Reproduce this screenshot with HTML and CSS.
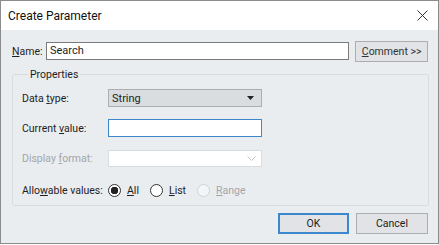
FILE: index.html
```html
<!DOCTYPE html>
<html lang="en">
<head>
    <meta charset="UTF-8">
    <title>Create Parameter</title>
    <link rel="stylesheet" href="styles.css">
</head>
<body>

    <div class="dialog">
        <div class="title-bar">
            <span class="title">Create Parameter</span>
            <svg class="close-icon" width="11" height="11" viewBox="0 0 11 11">
                <path d="M0.5 0.5 L10.5 10.5 M10.5 0.5 L0.5 10.5" stroke="#333" stroke-width="1" fill="none"/>
            </svg>
        </div>

        <div class="dialog-body">
            <div class="name-row">
                <label class="name-label"><u>N</u>ame:</label>
                <div class="text-input name-input">Search</div>
                <button class="btn comment-btn"><u>C</u>omment &gt;&gt;</button>
            </div>

            <fieldset class="group">
                <legend>Properties</legend>

                <div class="prop-row">
                    <label class="prop-label">Data <u>t</u>ype:</label>
                    <div class="select">
                        <span>String</span>
                        <svg width="7" height="4" viewBox="0 0 7 4"><path d="M0 0 H7 L3.5 4 Z" fill="#222"/></svg>
                    </div>
                </div>

                <div class="prop-row">
                    <label class="prop-label">Current <u>v</u>alue:</label>
                    <div class="text-input focused"></div>
                </div>

                <div class="prop-row disabled">
                    <label class="prop-label">Display <u>f</u>ormat:</label>
                    <div class="combo-disabled">
                        <svg width="9" height="5" viewBox="0 0 9 5"><path d="M0.5 0.5 L4.5 4.5 L8.5 0.5" stroke="#c4c7ca" fill="none"/></svg>
                    </div>
                </div>

                <div class="prop-row radio-row">
                    <label class="prop-label">Allo<u>w</u>able values:</label>
                    <div class="radios">
                        <span class="radio checked"></span><span class="radio-text"><u>A</u>ll</span>
                        <span class="radio"></span><span class="radio-text"><u>L</u>ist</span>
                        <span class="radio off"></span><span class="radio-text off-text"><u>R</u>ange</span>
                    </div>
                </div>
            </fieldset>

            <div class="footer">
                <button class="btn ok-btn">OK</button>
                <button class="btn cancel-btn">Cancel</button>
            </div>
        </div>
    </div>

</body>
</html>
```

FILE: styles.css
```css
body {
    margin: 0;
    padding: 0;
    font-family: Roboto, "Noto Sans", sans-serif;
    font-size: 10.5px;
    color: #1e1e1e;
}

.dialog {
    width: 439px;
    height: 244px;
    box-sizing: border-box;
    border: 1px solid #8c8c8c;
    background-color: #eaedf0;
    display: flex;
    flex-direction: column;
}

.title-bar {
    height: 29px;
    background-color: white;
    display: flex;
    align-items: center;
    justify-content: space-between;
    padding: 0 10px 0 7px;
    flex-shrink: 0;
}

.title {
    font-size: 12px;
    color: #111;
}

.dialog-body {
    padding: 11px 10px 0 11px;
}

.name-row {
    display: flex;
    align-items: center;
    height: 20px;
}

.name-label {
    width: 34px;
    white-space: nowrap;
}

.text-input {
    box-sizing: border-box;
    height: 18px;
    background-color: white;
    border: 1px solid #7a7a7a;
    padding: 0 3px;
    line-height: 16px;
}

.name-input {
    width: 304px;
    font-size: 11px;
}

.btn {
    font-family: inherit;
    font-size: 10.5px;
    color: #1e1e1e;
    background-color: #e1e3e6;
    border: 1px solid #adadad;
    height: 21px;
    padding: 0;
    box-sizing: border-box;
}

.comment-btn {
    width: 73px;
    margin-left: 6px;
    color: #333;
}

.group {
    margin: 7px 0 0 0;
    padding: 8px 0 9px 9px;
    border: 1px solid #d8dcdf;
    border-radius: 2px;
    height: 138px;
    box-sizing: border-box;
    width: 417px;
}

.group legend {
    padding: 0 2px;
    margin-left: 6px;
}

.prop-row {
    display: flex;
    align-items: center;
    height: 18px;
    margin-bottom: 12px;
}

.prop-label {
    width: 86px;
    white-space: nowrap;
}

.select {
    box-sizing: border-box;
    width: 154px;
    height: 18px;
    background-color: #dadde0;
    border: 1px solid #adadad;
    display: flex;
    align-items: center;
    justify-content: space-between;
    padding: 0 7px 0 3px;
    font-size: 11px;
}

.prop-row .text-input {
    width: 154px;
}

.focused {
    border-color: #3c88cc;
}

.disabled {
    color: #a3a6a9;
}

.combo-disabled {
    box-sizing: border-box;
    width: 154px;
    height: 17px;
    background-color: white;
    border: 1px solid #d9dcdf;
    display: flex;
    align-items: center;
    justify-content: flex-end;
    padding-right: 5px;
}

.radio-row {
    margin-top: 14px;
    margin-bottom: 0;
}

.radios {
    display: flex;
    align-items: center;
}

.radio {
    width: 13px;
    height: 13px;
    box-sizing: border-box;
    border-radius: 50%;
    border: 1px solid #333;
    background-color: white;
    margin-right: 6px;
}

.radio.checked {
    background: radial-gradient(circle, #222 0 3.5px, white 4px);
}

.radio.off {
    border-color: #d0d3d6;
    background-color: #f4f5f6;
}

.radio-text {
    margin-right: 11px;
}

.off-text {
    color: #a3a6a9;
}

.footer {
    display: flex;
    justify-content: flex-end;
    gap: 7px;
    margin-top: 7px;
}

.ok-btn {
    width: 71px;
    border: 2px solid #3c88cc;
}

.cancel-btn {
    width: 72px;
}
```
